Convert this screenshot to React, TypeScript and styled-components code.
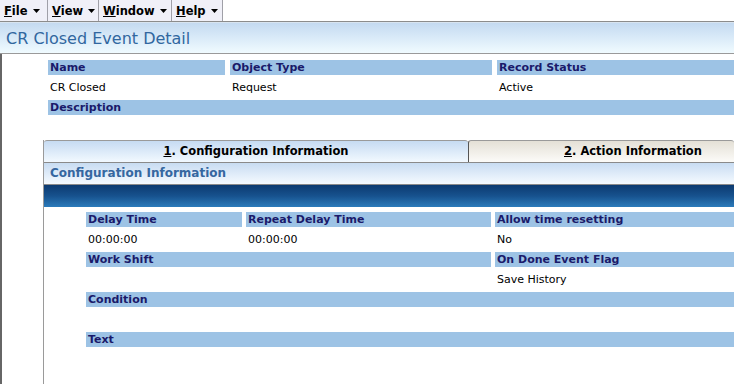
import React from "react"
import styled, { createGlobalStyle } from "styled-components"

const GlobalStyle = createGlobalStyle`
  html, body {
    margin: 0;
    padding: 0;
    overflow: hidden;
    background: #fff;
    font-family: "DejaVu Sans", Verdana, sans-serif;
  }
`

const Page = styled.div({
  display: "flex",
  flexDirection: "column",
  height: "100vh",
})

const MenuBar = styled.div({
  display: "flex",
  height: 21,
  borderBottom: "1px solid #8c8c8c",
  background: "#fff",
})

const MenuItem = styled.div<{ $width: number }>`
  display: flex;
  align-items: center;
  gap: 5px;
  width: ${(p) => p.$width}px;
  box-sizing: border-box;
  padding-left: 4px;
  background: #f0f0f8;
  border-right: 1px solid #a0a0a8;
  font-size: 11.5px;
  font-weight: bold;
  color: #000;
  white-space: nowrap;
`

const Arrow = () => (
  <svg width="7" height="4" viewBox="0 0 7 4">
    <path d="M0 0h7L3.5 4z" fill="#000" />
  </svg>
)

const TitleBar = styled.div({
  height: 30,
  lineHeight: "31px",
  paddingLeft: 6,
  fontSize: 16,
  color: "#31679f",
  background: "linear-gradient(#c4daf1, #f0fbff)",
  borderTop: "1px solid #d8e4f0",
  borderBottom: "1px solid #9a9a9a",
})

const Main = styled.div({
  flex: 1,
  display: "flex",
  flexDirection: "column",
  borderLeft: "2px solid #666",
  paddingTop: 6,
})

const FieldGrid = styled.div<{ $cols: string; $gap: number; $indent: number }>`
  display: grid;
  grid-template-columns: ${(p) => p.$cols};
  column-gap: ${(p) => p.$gap}px;
  margin-left: ${(p) => p.$indent}px;
`

const Label = styled.div<{ $span?: number }>`
  grid-column: span ${(p) => p.$span ?? 1};
  height: 15px;
  line-height: 16px;
  padding-left: 2px;
  background: #9dc3e5;
  color: #1a1a6a;
  font-size: 11px;
  font-weight: bold;
  white-space: nowrap;
`

const Value = styled.div<{ $span?: number }>`
  grid-column: span ${(p) => p.$span ?? 1};
  height: 25px;
  box-sizing: border-box;
  padding: 6px 2px 0;
  line-height: 13px;
  font-size: 11px;
  color: #000;
  white-space: nowrap;
`

const Panel = styled.div({
  flex: 1,
  marginLeft: 41,
  borderLeft: "1px solid #9a9a9a",
  display: "flex",
  flexDirection: "column",
})

const TabStrip = styled.div({
  display: "flex",
  height: 22,
  borderBottom: "1px solid #8a8a8a",
  whiteSpace: "nowrap",
})

const Tab = styled.div<{ $active?: boolean }>`
  flex: ${(p) => (p.$active ? "none" : "1")};
  width: ${(p) => (p.$active ? "424px" : "auto")};
  box-sizing: border-box;
  border-top: 1px solid #9a9a9a;
  border-left: ${(p) => (p.$active ? "none" : "1px solid #555")};
  border-radius: 3px 3px 0 0;
  background: ${(p) =>
    p.$active
      ? "linear-gradient(#c6dbf2, #f2f9ff)"
      : "linear-gradient(#e4e0d6, #fcfbf8)"};
  text-align: ${(p) => (p.$active ? "center" : "left")};
  padding-left: ${(p) => (p.$active ? 0 : 95)}px;
  line-height: 21px;
  font-size: 11.5px;
  font-weight: bold;
  color: #000;
`

const SectionHeader = styled.div({
  height: 21,
  lineHeight: "21px",
  paddingLeft: 6,
  fontSize: 12,
  fontWeight: "bold",
  color: "#3567a0",
  background: "linear-gradient(#c8dcf2, #f5faff)",
  borderBottom: "1px solid #8a8a8a",
})

const DarkBar = styled.div({
  height: 22,
  background: "linear-gradient(#0c3a70, #17528e 50%, #2b7bbb)",
})

const Content = styled.div({
  marginTop: 5,
})

const menus = [
  { key: "F", rest: "ile", width: 48 },
  { key: "V", rest: "iew", width: 51 },
  { key: "W", rest: "indow", width: 73 },
  { key: "H", rest: "elp", width: 51 },
]

export default function App() {
  return (
    <Page>
      <GlobalStyle />
      <MenuBar>
        {menus.map((m) => (
          <MenuItem key={m.key} $width={m.width}>
            <span>
              <u>{m.key}</u>
              {m.rest}
            </span>
            <Arrow />
          </MenuItem>
        ))}
      </MenuBar>
      <TitleBar>CR Closed Event Detail</TitleBar>
      <Main>
        <FieldGrid $cols="177px 262px 1fr" $gap={5} $indent={46}>
          <Label>Name</Label>
          <Label>Object Type</Label>
          <Label>Record Status</Label>
          <Value>CR Closed</Value>
          <Value>Request</Value>
          <Value>Active</Value>
          <Label $span={3}>Description</Label>
          <Value $span={3} />
        </FieldGrid>
        <Panel>
          <TabStrip>
            <Tab $active>
              <u>1</u>. Configuration Information
            </Tab>
            <Tab>
              <u>2</u>. Action Information
            </Tab>
          </TabStrip>
          <SectionHeader>Configuration Information</SectionHeader>
          <DarkBar />
          <Content>
            <FieldGrid $cols="156px 245px 1fr" $gap={4} $indent={42}>
              <Label>Delay Time</Label>
              <Label>Repeat Delay Time</Label>
              <Label>Allow time resetting</Label>
              <Value>00:00:00</Value>
              <Value>00:00:00</Value>
              <Value>No</Value>
              <Label $span={2}>Work Shift</Label>
              <Label>On Done Event Flag</Label>
              <Value $span={2} />
              <Value>Save History</Value>
              <Label $span={3}>Condition</Label>
              <Value $span={3} />
              <Label $span={3}>Text</Label>
              <Value $span={3} />
            </FieldGrid>
          </Content>
        </Panel>
      </Main>
    </Page>
  )
}
